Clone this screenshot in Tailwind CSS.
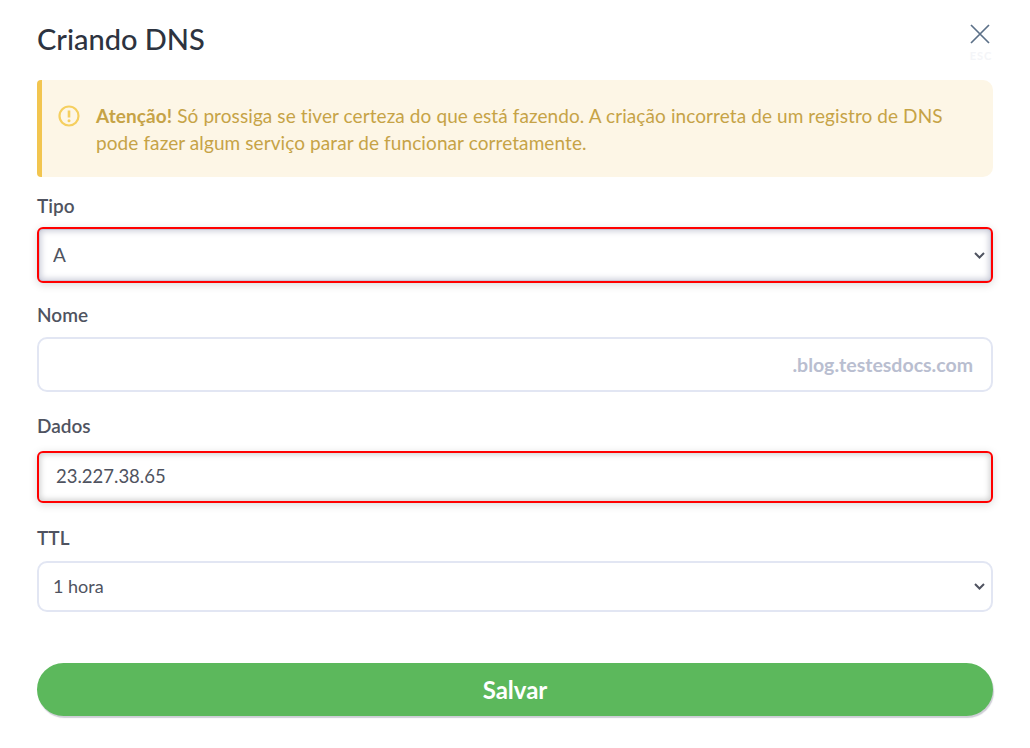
<!DOCTYPE html>
<html>
  <head>
    <meta charset="utf-8" />
    <title>Criando DNS</title>
    <script src="https://cdn.jsdelivr.net/npm/@tailwindcss/browser@4"></script>
  </head>
  <body class="bg-white">
    <div class="w-[1030px] h-[748px] overflow-hidden px-[37px] font-['Lato','Noto_Sans',sans-serif]">
      <!-- header -->
      <div class="flex justify-between h-[80px]">
        <h1 class="pt-[22px] text-[29px] leading-[34px] font-medium text-[#2d3340]">Criando DNS</h1>
        <button class="flex flex-col items-center w-[24px] pt-[22px]">
          <svg width="22" height="22" viewBox="0 0 22 22" fill="none" stroke="#5b7088" stroke-width="1.7">
            <path d="M1 3L19 21M19 3L1 21" />
          </svg>
          <span class="mt-[6px] text-[11px] leading-[12px] font-bold tracking-[1px] text-[#f4f5f8]">ESC</span>
        </button>
      </div>

      <!-- alert -->
      <div class="flex h-[97px] rounded-l-[4px] rounded-r-[10px] border-l-[5px] border-[#f2c54f] bg-[#fdf6e6] pl-[16px] pr-[40px] pt-[22px]">
        <svg class="mt-[3px] shrink-0" width="22" height="22" viewBox="0 0 22 22" fill="none">
          <circle cx="11" cy="11" r="9.5" stroke="#f5cf5f" stroke-width="2.2" />
          <path d="M11 5.5V12.5" stroke="#f5cf5f" stroke-width="2.6" />
          <circle cx="11" cy="15.8" r="1.5" fill="#f5cf5f" />
        </svg>
        <p class="ml-[16px] text-[19px] leading-[27px] tracking-[0.09px] text-[#c6a346]">
          <b class="font-bold">Atenção!</b> Só prossiga se tiver certeza do que está fazendo. A criação incorreta de um registro de DNS pode fazer algum serviço parar de funcionar corretamente.
        </p>
      </div>

      <!-- form -->
      <form class="flex flex-col">
        <label class="mt-[18px] mb-[10px] block text-[19px] leading-[22px] font-semibold text-[#4f5360]">Tipo</label>
        <div class="relative">
          <select class="h-[56px] w-full appearance-none rounded-[6px] border-2 border-[#ff0000] bg-white pl-[14px] text-[19px] text-[#4f5360] shadow-[inset_0_0_0_1px_#c5c8d8,inset_0_0_6px_2px_#c9cbd8,0_2px_8px_rgba(0,0,0,0.15)]">
            <option>A</option>
          </select>
          <svg class="absolute right-[8px] top-[25px]" width="11" height="7" viewBox="0 0 11 7" fill="none" stroke="#4f5360" stroke-width="2">
            <path d="M1 1L5.5 5.5L10 1" />
          </svg>
        </div>

        <label class="mt-[21px] mb-[11px] block text-[19px] leading-[22px] font-semibold text-[#4f5360]">Nome</label>
        <div class="flex h-[55px] items-center justify-end rounded-[10px] border-2 border-[#e2e6f3] pr-[18px]">
          <span class="text-[19.5px] font-bold text-[#b9bed0]">.blog.testesdocs.com</span>
        </div>

        <label class="mt-[23px] mb-[14px] block text-[19px] leading-[22px] font-semibold text-[#4f5360]">Dados</label>
        <input value="23.227.38.65" class="h-[52px] pb-[2px] rounded-[6px] border-2 border-[#ff0000] bg-white pl-[17px] text-[18.5px] text-[#4f5360] shadow-[inset_0_0_6px_1px_#c9c9c9,0_2px_8px_rgba(0,0,0,0.15)]" />

        <label class="mt-[24px] mb-[12px] block text-[19px] leading-[22px] font-semibold text-[#4f5360]">TTL</label>
        <div class="relative">
          <select class="h-[51px] w-full appearance-none rounded-[10px] border-2 border-[#e2e6f3] bg-white pl-[14px] text-[18px] text-[#4f5360]">
            <option>1 hora</option>
          </select>
          <svg class="absolute right-[8px] top-[22px]" width="11" height="7" viewBox="0 0 11 7" fill="none" stroke="#4f5360" stroke-width="2">
            <path d="M1 1L5.5 5.5L10 1" />
          </svg>
        </div>

        <button type="button" class="mt-[51px] h-[53px] rounded-full bg-[#5cb85c] text-[24px] font-bold text-white shadow-[1px_2px_1px_rgba(60,60,90,0.25)]">Salvar</button>
      </form>
    </div>
  </body>
</html>
